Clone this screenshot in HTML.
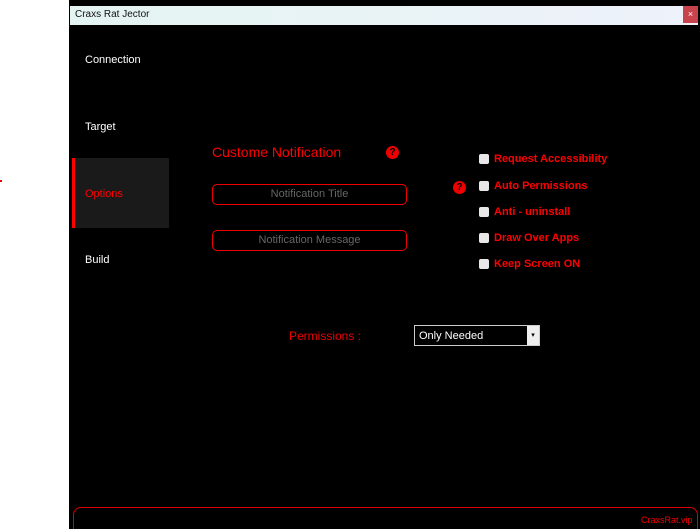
<!DOCTYPE html>
<html><head><style>
*{margin:0;padding:0;box-sizing:border-box}
html,body{width:700px;height:529px;overflow:hidden}
body{background:#fff;position:relative;font-family:"Liberation Sans",sans-serif}
.a{position:absolute}
.nav{color:#fff;font-size:11px;left:85px}
.cb{width:10px;height:10px;background:#e8e8e8;border-radius:2px;left:479px}
.cl{left:494px;color:#f00;font-weight:bold;font-size:11px}
.inp{left:212px;width:195px;height:21px;border:1.5px solid #e00;border-radius:5px;color:#666;font-size:11px;text-align:center;line-height:19px}
.q{width:13px;height:13px;border-radius:50%;background:#e00;color:#000;font-weight:bold;font-size:10px;text-align:center;line-height:13px}
</style></head><body>
<div class="a" style="left:69px;top:0;width:631px;height:529px;background:#000"></div>
<div class="a" style="left:0;top:180px;width:2px;height:2px;background:#e00"></div>
<div class="a" style="left:70px;top:6px;width:628px;height:19px;background:linear-gradient(90deg,#e4f4f2,#eef2fa);"></div>
<div class="a" style="left:75px;top:9px;font-size:10px;color:#111">Craxs Rat Jector</div>
<div class="a" style="left:683px;top:6px;width:15px;height:17px;background:#c8434c;color:#fff;font-size:9px;text-align:center;line-height:17px">×</div>
<div class="a nav" style="top:54px">Connection</div>
<div class="a nav" style="top:121px">Target</div>
<div class="a" style="left:72px;top:158px;width:97px;height:70px;background:#1a1a1a"></div>
<div class="a" style="left:72px;top:158px;width:3px;height:70px;background:#f00"></div>
<div class="a nav" style="top:188px;color:#f00">Options</div>
<div class="a nav" style="top:254px">Build</div>
<div class="a" style="left:212px;top:144px;color:#f00;font-size:14px">Custome Notification</div>
<div class="a q" style="left:386px;top:146px">?</div>
<div class="a inp" style="top:184px">Notification Title</div>
<div class="a inp" style="top:230px">Notification Message</div>
<div class="a q" style="left:453px;top:181px">?</div>
<div class="a cb" style="top:154px"></div><div class="a cl" style="top:153px">Request Accessibility</div>
<div class="a cb" style="top:181px"></div><div class="a cl" style="top:180px">Auto Permissions</div>
<div class="a cb" style="top:207px"></div><div class="a cl" style="top:206px">Anti - uninstall</div>
<div class="a cb" style="top:233px"></div><div class="a cl" style="top:232px">Draw Over Apps</div>
<div class="a cb" style="top:259px"></div><div class="a cl" style="top:258px">Keep Screen ON</div>
<div class="a" style="left:289px;top:329px;color:#e00;font-size:12px">Permissions :</div>
<div class="a" style="left:414px;top:325px;width:126px;height:21px;border:1px solid #ccc;background:#000;color:#fff;font-size:11px;line-height:21px;padding-left:4px">Only Needed</div>
<div class="a" style="left:527px;top:326px;width:12px;height:19px;background:#eee;color:#000;font-size:7px;text-align:center;line-height:19px">▾</div>
<div class="a" style="left:73px;top:507px;width:625px;height:30px;border:1px solid #d00;border-radius:8px"></div>
<div class="a" style="left:641px;top:515px;color:#e00;font-size:9px">CraxsRat.vip</div>
</body></html>
